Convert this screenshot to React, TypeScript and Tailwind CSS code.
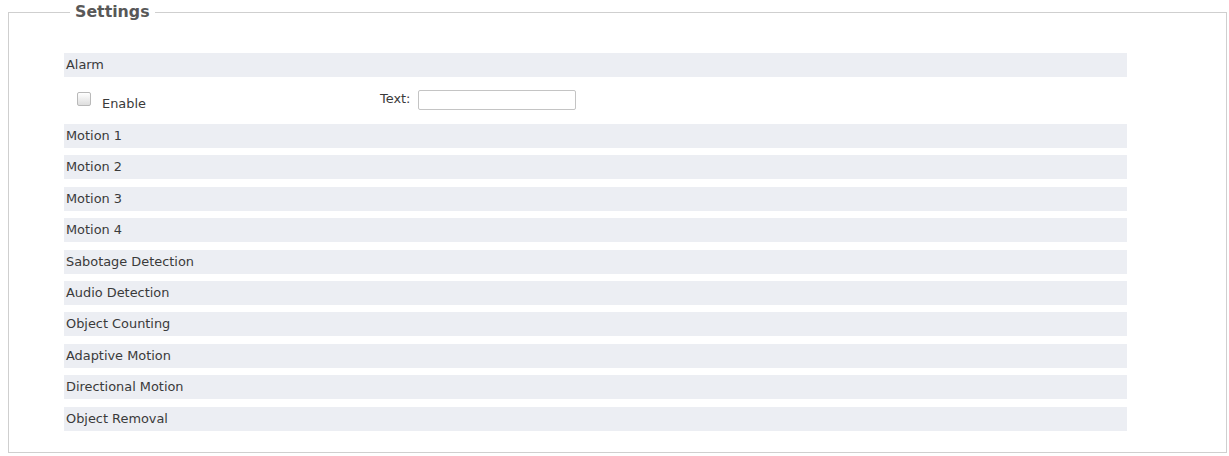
const sections = [
  "Motion 1",
  "Motion 2",
  "Motion 3",
  "Motion 4",
  "Sabotage Detection",
  "Audio Detection",
  "Object Counting",
  "Adaptive Motion",
  "Directional Motion",
  "Object Removal",
];

function SectionBar({ title }: { title: string }) {
  return (
    <div className="flex h-6 w-[1063px] items-center bg-[#eceef3] pl-[2px] text-[12.9px] leading-4 text-[#3a3a3a]">
      {title}
    </div>
  );
}

export default function App() {
  return (
    <div
      className="bg-white"
      style={{ fontFamily: '"DejaVu Sans", Verdana, sans-serif' }}
    >
      <fieldset className="ml-2 mr-[2px] border border-[#cfcfcf] pb-[21px] pl-[55px]">
        <legend className="ml-[6px] px-[5px] text-[15.8px] font-bold leading-6 text-[#585858]">
          Settings
        </legend>

        <div className="mt-[29px]">
          <SectionBar title="Alarm" />

          <div className="flex h-[47px] items-start text-[12.9px] leading-4 text-[#3a3a3a]">
            <div className="flex w-[316px] items-start pl-[13px]">
              <span className="mt-[15px] h-[14px] w-[14px] rounded-[2px] border border-[#b9b9b9] bg-gradient-to-b from-white to-[#dedede]" />
              <span className="ml-[11px] pt-[19px]">Enable</span>
            </div>
            <span className="pt-[14px]">Text:</span>
            <input
              type="text"
              className="ml-[8px] mt-[13px] h-5 w-[158px] rounded-[2px] border border-[#c4c4c4] bg-white px-1 text-[12px] outline-none"
            />
          </div>

          <div className="flex flex-col gap-[7.4px]">
            {sections.map((s) => (
              <SectionBar key={s} title={s} />
            ))}
          </div>
        </div>
      </fieldset>
    </div>
  );
}
